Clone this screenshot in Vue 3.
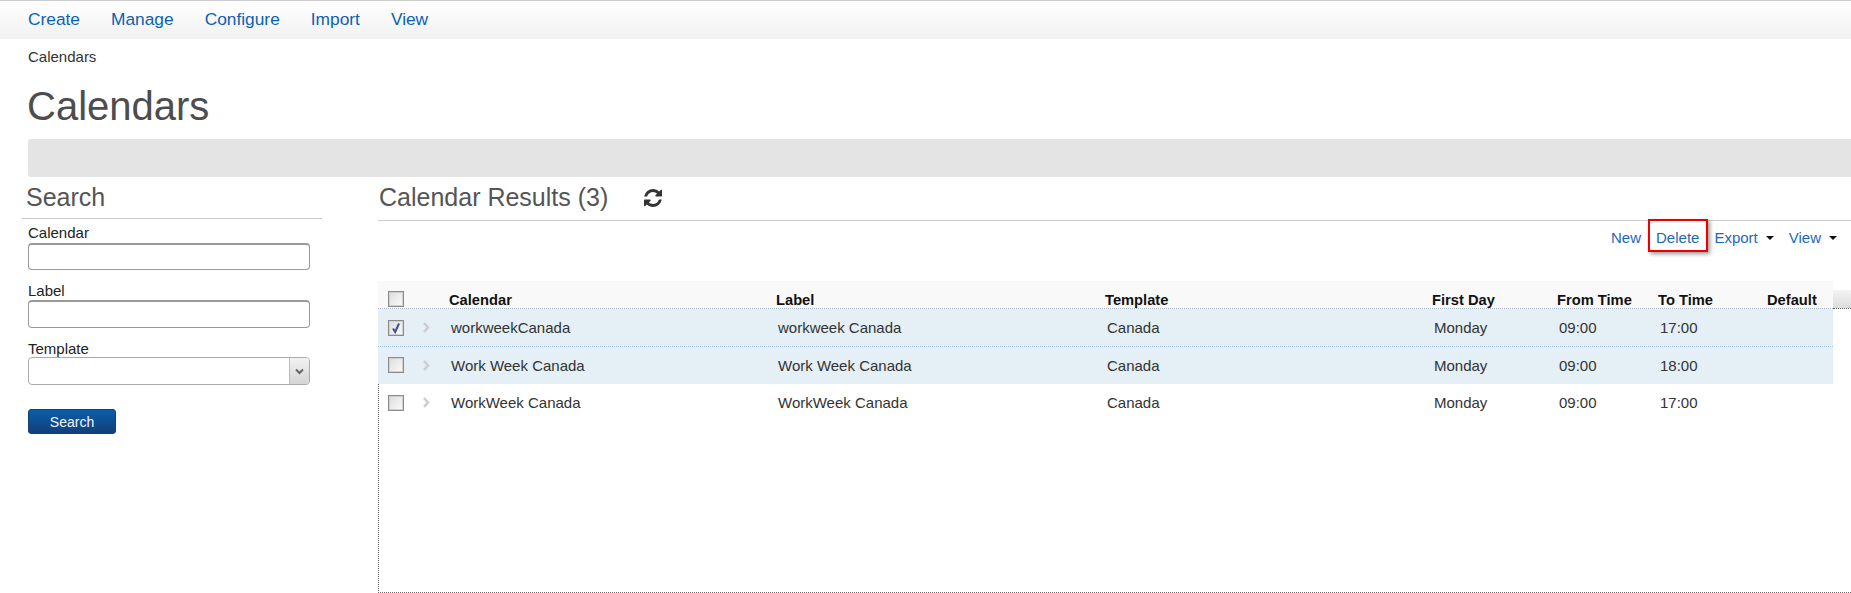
<template>
  <div class="page">
    <!-- top menu -->
    <nav class="menu">
      <a v-for="item in menu" :key="item">{{ item }}</a>
    </nav>
    <div class="crumb">Calendars</div>
    <h1 class="title">Calendars</h1>
    <div class="banner"></div>

    <div class="columns">
      <!-- search panel -->
      <aside class="search">
        <h2 class="search-head">Search</h2>
        <label class="field-label first">Calendar</label>
        <input class="field" type="text" />
        <label class="field-label">Label</label>
        <input class="field tall" type="text" />
        <label class="field-label">Template</label>
        <div class="select">
          <span class="select-btn">
            <svg width="9" height="7" viewBox="0 0 9 7"><path d="M1 1.500 4.500 5 8 1.500" fill="none" stroke="#666" stroke-width="2" /></svg>
          </span>
        </div>
        <button class="search-btn">Search</button>
      </aside>

      <!-- results -->
      <section class="results">
        <div class="results-head">
          <h2>Calendar Results (3)</h2>
          <svg class="refresh" width="18" height="18" viewBox="0 0 1536 1536">
            <path fill="#333" d="M1511 928q0 5-1 7-64 268-268 434.500t-478 166.500q-146 0-282.500-55t-243.500-157l-129 129q-19 19-45 19t-45-19-19-45v-448q0-26 19-45t45-19h448q26 0 45 19t19 45-19 45l-137 137q71 66 161 102t187 36q134 0 250-65t186-179q11-17 53-117 8-23 30-23h192q13 0 22.500 9.500t9.500 22.500zm25-800v448q0 26-19 45t-45 19h-448q-26 0-45-19t-19-45 19-45l138-138q-148-137-349-137-134 0-250 65t-186 179q-11 17-53 117-8 23-30 23h-199q-13 0-22.500-9.500t-9.500-22.500v-7q65-268 270-434.500t480-166.500q146 0 284 55.500t245 156.500l130-129q19-19 45-19t45 19 19 45z" />
          </svg>
        </div>

        <div class="toolbar">
          <a>New</a>
          <a class="marked">Delete<span class="red-box"></span></a>
          <a class="drop">Export<i class="caret"></i></a>
          <a class="drop">View<i class="caret"></i></a>
        </div>

        <div class="grid-wrap">
          <div class="row header">
            <span class="check"></span>
            <span></span>
            <span v-for="h in headers" :key="h">{{ h }}</span>
          </div>
          <div class="body">
            <div v-for="(r, i) in rows" :key="i" class="row item" :class="{ picked: i < 2, split: i === 0, second: i === 1 }">
              <span class="check" :class="{ on: r.checked }">
                <svg v-if="r.checked" width="12" height="12" viewBox="0 0 12 12"><path d="M3 6.500 5.200 10 9 1.500" fill="none" stroke="#3f4f9c" stroke-width="2" /></svg>
              </span>
              <svg class="chev" width="7" height="11" viewBox="0 0 7 11"><path d="M1 1l4 4.500L1 10" fill="none" stroke="#cdcdcd" stroke-width="2.500" /></svg>
              <span>{{ r.calendar }}</span>
              <span>{{ r.label }}</span>
              <span>{{ r.template }}</span>
              <span>{{ r.day }}</span>
              <span>{{ r.from }}</span>
              <span>{{ r.to }}</span>
              <span></span>
            </div>
          </div>
        </div>
      </section>
    </div>
  </div>
</template>

<script setup>
const menu = ['Create', 'Manage', 'Configure', 'Import', 'View']
const headers = ['Calendar', 'Label', 'Template', 'First Day', 'From Time', 'To Time', 'Default']

const rows = [
  { calendar: 'workweekCanada', label: 'workweek Canada', template: 'Canada', day: 'Monday', from: '09:00', to: '17:00', checked: true },
  { calendar: 'Work Week Canada', label: 'Work Week Canada', template: 'Canada', day: 'Monday', from: '09:00', to: '18:00', checked: false },
  { calendar: 'WorkWeek Canada', label: 'WorkWeek Canada', template: 'Canada', day: 'Monday', from: '09:00', to: '17:00', checked: false }
]
</script>

<style>
html, body {
  margin: 0;
  background: #fff;
  overflow: hidden;
}
</style>

<style scoped>
.page {
  width: 1851px;
  height: 593px;
  overflow: hidden;
  font-family: "Liberation Sans", Arial, sans-serif;
  font-size: 15px;
  color: #333;
}

.menu {
  display: flex;
  box-sizing: border-box;
  height: 39px;
  padding: 0 0 2px 28px;
  gap: 31px;
  align-items: center;
  border-top: 1px solid #ccc;
  background: linear-gradient(#fff, #f1f1f1);
  font-size: 17.330px;
  color: #0b62b4;
}

.crumb {
  margin: 8px 0 0 28px;
  height: 20px;
  line-height: 19px;
  font-size: 15px;
}

.title {
  margin: 9px 0 0 27px;
  height: 63px;
  line-height: 60px;
  font-size: 40px;
  font-weight: normal;
  color: #4d4d4d;
}

.banner {
  height: 38px;
  margin-left: 28px;
  background: #e4e4e4;
  border-radius: 3px 0 0 3px;
}

.columns {
  display: flex;
}

.search {
  width: 300px;
  margin-left: 22px;
  display: flex;
  flex-direction: column;
  align-items: flex-start;
}

.search-head {
  align-self: stretch;
  margin: 0;
  height: 41px;
  line-height: 40px;
  padding-left: 4px;
  font-size: 25px;
  font-weight: normal;
  color: #555;
  border-bottom: 1px solid #ccc;
}

.field-label {
  margin: 13px 0 0 6px;
  height: 15px;
  line-height: 15px;
  color: #222;
}

.field-label.first {
  margin-top: 6px;
  height: 16px;
}

.field {
  box-sizing: border-box;
  width: 282px;
  height: 27px;
  margin: 2px 0 0 6px;
  padding: 0;
  border: 1px solid #999;
  border-top-width: 2px;
  border-radius: 4px;
  background: #fff;
}

.field.tall {
  height: 28px;
}

.select {
  box-sizing: border-box;
  width: 282px;
  height: 28px;
  margin: 1px 0 0 6px;
  border: 1px solid #aaa;
  border-radius: 4px;
  display: flex;
  justify-content: flex-end;
  overflow: hidden;
}

.select-btn {
  width: 19px;
  display: flex;
  align-items: center;
  justify-content: center;
  border-left: 1px solid #bbb;
  background: linear-gradient(#f2f2f2, #d4d4d4);
}

.search-btn {
  width: 88px;
  height: 25px;
  margin: 24px 0 0 6px;
  padding: 0;
  border: 1px solid #123f75;
  border-radius: 3px;
  background: linear-gradient(#0a5ea8, #123f7a);
  color: #f4f6fa;
  font: 14px "Liberation Sans", Arial, sans-serif;
}

.results {
  flex: 1;
  margin-left: 56px;
}

.results-head {
  display: flex;
  align-items: center;
  height: 43px;
  border-bottom: 1px solid #ccc;
}

.results-head h2 {
  margin: 0 0 3px 1px;
  font-size: 25px;
  font-weight: normal;
  color: #555;
}

.refresh {
  margin: 0 0 2px 36px;
}

.toolbar {
  display: flex;
  justify-content: flex-end;
  align-items: center;
  height: 33px;
  padding-right: 14px;
  gap: 15px;
  color: #1d68b8;
}

.marked {
  position: relative;
}

/* red annotation drawn over the screenshot */
.red-box {
  position: absolute;
  left: -8px;
  right: -9px;
  top: -10px;
  bottom: -6px;
  border: 2px solid #ee0000;
  box-shadow: 2px 2px 4px rgba(0, 0, 0, 0.4);
}

.drop {
  display: flex;
  align-items: center;
}

.caret {
  width: 0;
  height: 0;
  margin-left: 8px;
  border-left: 4px solid transparent;
  border-right: 4px solid transparent;
  border-top: 4px solid #111;
}

.grid-wrap {
  margin-top: 27px;
}

.row {
  display: grid;
  grid-template-columns: 71px 0 327px 329px 327px 125px 101px 109px 66px;
  align-items: center;
}

.header {
  box-sizing: border-box;
  height: 28px;
  width: 1455px;
  padding-top: 9px;
  font-weight: bold;
  font-size: 14.700px;
  color: #111;
  background: #f9f9f9;
  border-bottom: 1px dotted #a9b5c9;
  position: relative;
}

.header > span:not(.check) {
  padding-top: 2px;
}

/* grey stub right of the header */
.header::after {
  content: "";
  position: absolute;
  left: 1455px;
  top: 9px;
  width: 18px;
  height: 18px;
  background: linear-gradient(#f4f4f4, #dcdcdc);
  border-bottom: 1px dotted #666;
}

.body {
  box-sizing: border-box;
  height: 284px;
  border-left: 1px dotted #666;
  border-bottom: 1px dotted #666;
}

.item {
  width: 1455px;
  height: 37px;
  margin-left: -1px;
  color: #333;
}

.item > span:nth-child(n + 3) {
  padding-left: 2px;
}

.item.picked {
  background: #e4eff6;
}

.item.split {
  border-bottom: 1px dotted #a8c4e6;
}

.item.second {
  height: 36px;
  padding-bottom: 1px;
}

.check {
  box-sizing: border-box;
  display: flex;
  align-items: center;
  justify-content: center;
  width: 16px;
  height: 16px;
  margin: 0 0 0 10px;
  border: 1px solid #8a8a8a;
  box-shadow: inset 0 0 0 1px #d0d0d0;
  background: linear-gradient(135deg, #dcdcdc, #fbfbfb);
}

.chev {
  margin-left: -26px;
}
</style>
